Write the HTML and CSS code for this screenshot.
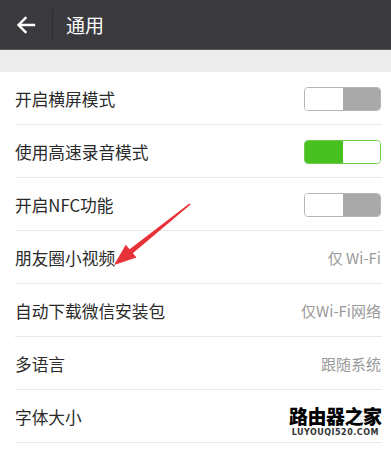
FILE: index.html
```html
<!DOCTYPE html>
<html lang="zh">
<head>
<meta charset="utf-8">
<link rel="stylesheet" href="styles.css">
</head>
<body>
<div class="page">
  <header class="topbar">
    <svg class="back" width="20" height="18" viewBox="0 0 20 18"><path d="M18 9H3M9.5 2L2.5 9l7 7" fill="none" stroke="#fff" stroke-width="2.4" stroke-linecap="square"/></svg>
    <span class="divider"></span>
    <span class="title">通用</span>
  </header>
  <div class="band"></div>
  <ul class="list">
    <li class="row"><span class="label">开启横屏模式</span><span class="toggle off"><i></i><i></i></span></li>
    <li class="row"><span class="label">使用高速录音模式</span><span class="toggle on"><i></i><i></i></span></li>
    <li class="row"><span class="label">开启NFC功能</span><span class="toggle off"><i></i><i></i></span></li>
    <li class="row"><span class="label">朋友圈小视频</span><span class="value">仅 Wi-Fi</span></li>
    <li class="row"><span class="label">自动下载微信安装包</span><span class="value">仅Wi-Fi网络</span></li>
    <li class="row"><span class="label">多语言</span><span class="value">跟随系统</span></li>
    <li class="row"><span class="label">字体大小</span><span class="value">标准</span></li>
  </ul>
  <svg class="arrow" width="391" height="454" viewBox="0 0 391 454"><polygon points="114,265 136.5,257.6 132.8,253.2 190.6,204.6 189.4,203.4 129.6,249.2 125.8,244.8" fill="#e8323a"/></svg>
  <div class="mark">
    <span class="mark-main">路由器之家</span>
    <span class="mark-sub">LUYOUQI520.COM</span>
  </div>
</div>
</body>
</html>
```
FILE: styles.css
```css
* { box-sizing: border-box; }
html, body { margin: 0; padding: 0; background: #fff; }
body { font-family: "Noto Sans CJK SC", "Noto Sans", sans-serif; }
.page { position: relative; width: 391px; height: 454px; overflow: hidden; background: #fff; }
.topbar {
  height: 50px;
  background: #3a3a3e;
  display: flex;
  align-items: center;
  border-bottom: 1px solid #55555a;
}
.back { margin-left: 16px; }
.divider { width: 1px; height: 30px; background: #2c2c30; margin-left: 16px; }
.title { color: #fff; font-size: 19px; margin-left: 13px; line-height: 1; }
.band { height: 22px; background: #ececec; }
.list { list-style: none; margin: 0; padding: 0; }
.row {
  height: 53px;
  display: flex;
  align-items: center;
  justify-content: space-between;
  padding: 0 10px 0 15px;
  position: relative;
}
.row::after {
  content: "";
  position: absolute;
  left: 15px;
  right: 9px;
  bottom: 0;
  height: 1px;
  background: #e8e8e8;
}
.label { font-size: 16.7px; color: #2a2a2a; }
.value { font-size: 15px; color: #9a9a9a; }
.toggle {
  width: 77px;
  height: 24px;
  border-radius: 4px;
  border: 1px solid #b4b4b4;
  display: flex;
  overflow: hidden;
}
.toggle i { flex: 1; }
.toggle.off i:first-child { background: #fff; }
.toggle.off i:last-child { background: #a9a9a9; }
.toggle.on { border-color: #6cc94a; }
.toggle.on i:first-child { background: #46c11f; }
.toggle.on i:last-child { background: #fff; }
.arrow { position: absolute; left: 0; top: 0; pointer-events: none; }
.mark {
  position: absolute;
  left: 289px;
  top: 405px;
  display: flex;
  flex-direction: column;
  align-items: center;
  background: rgba(255,255,255,0.7);
}
.mark-main {
  font-size: 19px;
  font-weight: 900;
  color: #000;
  line-height: 22px;
  letter-spacing: -0.5px;
}
.mark-sub {
  font-family: "DejaVu Sans", sans-serif;
  font-size: 8px;
  font-weight: bold;
  color: #333;
  letter-spacing: 0.5px;
  line-height: 12px;
}
```
